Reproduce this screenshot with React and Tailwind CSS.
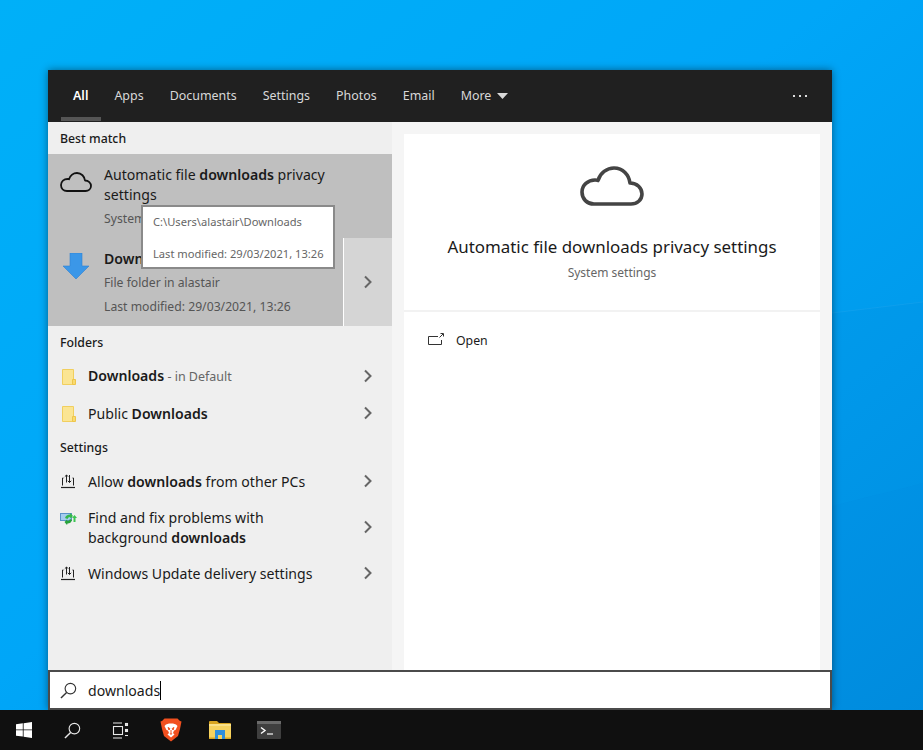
import React from "react";

const Chevron = () => (
  <svg width="10" height="14" viewBox="0 0 10 14" fill="none" className="shrink-0 -mt-px">
    <path d="M2 1.5 L7.5 7 L2 12.5" stroke="#666" strokeWidth="2" />
  </svg>
);

const Cloud = ({ w, h, sw }) => (
  <svg width={w} height={h} viewBox="0 0 64 40" fill="none" className="shrink-0">
    <path
      d="M14 38 C7 38 2 33 2 26 C2 19 8 14 15 14 C16 14 17 14 18 14.5 C20 7 27 2 34 2 C43 2 49 9 50 17 C57 17 62 22 62 28 C62 34 57 38 51 38 Z"
      stroke={sw.c}
      strokeWidth={sw.w}
      strokeLinejoin="round"
    />
  </svg>
);

const FolderPage = () => (
  <svg width="16" height="18" viewBox="0 0 16 18" className="shrink-0">
    <path d="M2.5 1.5 H13.5 V16.5 H2.5 Z" fill="#fbe593" stroke="#f1cf5e" />
    <path d="M12.5 11.5 H15.5 V16.5 H12.5 Z" fill="#f9da6f" stroke="#eec54a" />
  </svg>
);

const LaptopArrows = () => (
  <svg width="16" height="15" viewBox="0 0 16 15" fill="none" className="shrink-0 -mt-px" stroke="#222" strokeWidth="1">
    <path d="M3.5 4 H2.5 V11.5 M13.5 11.5 V4 H12.5" />
    <path d="M1 13.5 H15" strokeWidth="1.2" />
    <path d="M6.5 8.5 V1 M4.8 2.7 L6.5 1 L8.2 2.7" />
    <path d="M9.5 1 V8.5 M7.8 6.8 L9.5 8.5 L11.2 6.8" />
  </svg>
);

const FixIcon = () => (
  <svg width="17" height="12" viewBox="0 0 17 12" className="shrink-0">
    <rect x="0" y="0" width="12" height="8" fill="#5b93c9" />
    <rect x="1" y="1" width="10" height="6" fill="#a5cdf0" />
    <path d="M5 5 Q6 1.5 10 1.5 L10.5 0 L13 3 L10.5 5.5 L10 4 Q8 4 7.5 6 Z" fill="#35b84a" />
    <path d="M12 7 Q11 10.5 7.5 10.5 L7 12 L4.5 9 L7 6.5 L7.5 8 Q9.5 8 10 6 Z" fill="#27a33c" />
    <path d="M12 5 L14.5 2 L17 5 H15.5 V9 H13.5 V5 Z" fill="#3cc552" />
  </svg>
);

const SearchGlass = ({ color, size }) => (
  <svg width={size} height={size} viewBox="0 0 18 18" fill="none" className="shrink-0" stroke={color} strokeWidth="1.2">
    <circle cx="11" cy="7" r="5.6" />
    <path d="M7 11 L1 17" strokeWidth="1.5" />
  </svg>
);

const Brave = () => (
  <svg width="22" height="24" viewBox="0 0 22 24" className="shrink-0">
    <path d="M4.5 0.5 H17.5 L20 3 L21.5 3.5 L20 11 L18 18 L11 23.5 L4 18 L2 11 L0.5 3.5 L2 3 Z" fill="#f1501f" />
    <path
      d="M6 6.5 L9 5.5 H13 L16 6.5 L17.5 8 L15.5 12 L14 12.5 L13 15 L14.5 16.5 L11 19.5 L7.5 16.5 L9 15 L8 12.5 L6.5 12 L4.5 8 Z"
      fill="#fff"
    />
    <path d="M8 9.5 L9.8 10.5 L9 12 Z M14 9.5 L12.2 10.5 L13 12 Z M11 12 V16" stroke="#f1501f" strokeWidth="1" fill="#f1501f" />
    <path d="M9.5 15.5 H12.5 L11 17 Z" fill="#f1501f" />
  </svg>
);

const Explorer = () => (
  <svg width="22" height="18" viewBox="0 0 22 18" className="shrink-0">
    <path d="M0 1 Q0 0 1 0 H8 L10 2 H21 Q22 2 22 3 V5 H0 Z" fill="#d9a520" />
    <rect x="0" y="3" width="22" height="15" fill="#f7d35f" />
    <rect x="0" y="3" width="22" height="2" fill="#fbe28a" />
    <path d="M6 9 H16 V18 H13 V14 H9 V18 H6 Z" fill="#2f8fdc" />
    <rect x="0" y="16.5" width="6" height="1.5" fill="#d9a520" />
    <rect x="16" y="16.5" width="6" height="1.5" fill="#d9a520" />
  </svg>
);

const Terminal = () => (
  <svg width="24" height="18" viewBox="0 0 24 18" className="shrink-0">
    <rect width="24" height="18" rx="1" fill="#3f3f3f" />
    <rect width="24" height="3" fill="#6a6a6a" />
    <path d="M4 6.5 L8 9.5 L4 12.5" stroke="#fff" strokeWidth="1.4" fill="none" />
    <path d="M10 13 H16" stroke="#ddd" strokeWidth="1.4" />
  </svg>
);

const Row = ({ h, children }) => (
  <div className={`flex items-center pl-3 pr-[19px] ${h}`}>{children}</div>
);

const GroupLabel = ({ h, children }) => (
  <div className={`flex items-center pl-3 text-[12.3px] font-medium text-[#1a1a1a] ${h}`}>{children}</div>
);

export default function App() {
  const body = "text-[14.1px] leading-5 text-[#1a1a1a]";
  const sub = "text-[12.2px] leading-5 mt-[4px] text-[#555]";
  return (
    <div className="relative flex flex-col w-[923px] h-[750px] overflow-hidden font-['Noto_Sans',sans-serif]">
      <svg className="absolute inset-0" width="923" height="750" viewBox="0 0 923 750">
        <defs>
          <linearGradient id="wall" x1="0" y1="0" x2="1" y2="1">
            <stop offset="0" stopColor="#00b0f8" />
            <stop offset="0.45" stopColor="#00a6f8" />
            <stop offset="1" stopColor="#008fdf" />
          </linearGradient>
        </defs>
        <rect width="923" height="750" fill="url(#wall)" />
        <path d="M832 313 L923 302 V750 H832 Z" fill="#0060c0" fillOpacity="0.05" />
        <path d="M832 313 L923 302" stroke="#ffffff" strokeOpacity="0.05" />
        <path d="M832 506 L923 483 V750 H832 Z" fill="#0060c0" fillOpacity="0.04" />
      </svg>
      <div className="relative flex-1 flex pt-[70px] pl-12">
        <div className="flex flex-col w-[784px] h-[640px] shadow-[0_0_8px_rgba(0,0,0,0.45)]">
          <div className="flex items-center h-[52px] bg-[#202020] pl-[25px] pr-[25px] gap-[26px] text-[12.45px] text-[#d8d8d8] relative">
            <span className="font-semibold text-white">All</span>
            <span>Apps</span>
            <span>Documents</span>
            <span>Settings</span>
            <span>Photos</span>
            <span>Email</span>
            <span className="flex items-center gap-[6px]">
              More
              <svg width="11" height="6" viewBox="0 0 11 6"><path d="M0 0 H11 L5.5 6 Z" fill="#d8d8d8" /></svg>
            </span>
            <svg width="14" height="2" viewBox="0 0 14 2" className="ml-auto" fill="#ddd">
              <rect x="0" width="2" height="2" /><rect x="6" width="2" height="2" /><rect x="12" width="2" height="2" />
            </svg>
            <div className="absolute left-[13px] bottom-[1px] w-10 h-1 bg-[#555]" />
          </div>
          <div className="flex flex-1 min-h-0">
            <div className="relative w-[344px] bg-[#efefef] flex flex-col">
              <GroupLabel h="h-8 pt-[3px]">Best match</GroupLabel>
              <div className="flex h-[84px] bg-[#bfbfbf] pl-3 pt-[11px]">
                <div className="w-11 pt-[7px]"><Cloud w={32} h={20} sw={{ c: "#111", w: 3.6 }} /></div>
                <div className="flex-1 pr-10">
                  <div className={body}>Automatic file <b className="font-semibold">downloads</b> privacy settings</div>
                  <div className={sub}>System settings</div>
                </div>
              </div>
              <div className="flex h-[88px]">
                <div className="flex w-[295px] bg-[#bfbfbf] pl-[15px] pt-[11px]">
                  <svg width="26" height="27" viewBox="0 0 26 27" className="shrink-0 mt-1">
                    <path d="M7 0 H19 V13 H26 L13 26 L0 13 H7 Z" fill="#3b97e8" stroke="#2f7fd0" strokeWidth="0.6" />
                  </svg>
                  <div className="ml-[15px]">
                    <div className={`${body} font-semibold`}>Downloads</div>
                    <div className={sub}>File folder in alastair</div>
                    <div className={sub}>Last modified: 29/03/2021, 13:26</div>
                  </div>
                </div>
                <div className="w-px bg-white" />
                <div className="flex-1 bg-[#d5d5d5] flex items-center justify-center"><Chevron /></div>
              </div>
              <GroupLabel h="h-8 pt-[3px]">Folders</GroupLabel>
              <Row h="h-[37px]">
                <div className="w-7"><FolderPage /></div>
                <span className={`flex-1 ${body}`}><b className="font-semibold">Downloads</b><span className="text-[12.5px] text-[#666]"> - in Default</span></span>
                <Chevron />
              </Row>
              <Row h="h-[37px]">
                <div className="w-7"><FolderPage /></div>
                <span className={`flex-1 ${body}`}>Public <b className="font-semibold">Downloads</b></span>
                <Chevron />
              </Row>
              <GroupLabel h="h-[31px] pt-px">Settings</GroupLabel>
              <Row h="h-[37px]">
                <div className="w-7"><LaptopArrows /></div>
                <span className={`flex-1 ${body}`}>Allow <b className="font-semibold">downloads</b> from other PCs</span>
                <Chevron />
              </Row>
              <Row h="h-[55px]">
                <div className="w-7 -mt-[17px]"><FixIcon /></div>
                <span className={`flex-1 ${body}`}>Find and fix problems with<br />background <b className="font-semibold">downloads</b></span>
                <Chevron />
              </Row>
              <Row h="h-[37px]">
                <div className="w-7"><LaptopArrows /></div>
                <span className={`flex-1 ${body}`}>Windows Update delivery settings</span>
                <Chevron />
              </Row>
              <div className="absolute left-[93px] top-[83px] w-[194px] h-[64px] bg-white border-2 border-[#8a8a8a] pl-[10px] pt-[7px] text-[11.15px] leading-[16px] text-[#666]">
                <div>C:\Users\alastair\Downloads</div>
                <div className="mt-[16px]">Last modified: 29/03/2021, 13:26</div>
              </div>
            </div>
            <div className="flex-1 bg-[#f5f5f5] pt-3 px-3">
              <div className="h-full bg-white flex flex-col">
                <div className="h-[178px] flex flex-col items-center pt-8 border-b-2 border-[#f2f2f2]">
                  <Cloud w={64} h={40} sw={{ c: "#444", w: 3.6 }} />
                  <div className="mt-[29px] text-[16.9px] leading-6 text-[#1a1a1a]">Automatic file downloads privacy settings</div>
                  <div className="mt-[4px] text-[12px] leading-5 text-[#666]">System settings</div>
                </div>
                <div className="flex items-center pl-6 pt-5 gap-[12px] text-[12.3px] text-[#1a1a1a]">
                  <svg width="16" height="13" viewBox="0 0 16 13" fill="none" stroke="#333" strokeWidth="1" className="-mt-[4px]">
                    <path d="M10 3.5 H0.5 V11.5 H13.5 V7" />
                    <path d="M11.5 4.5 L15 1 M12.5 0.5 H15.5 V3.5" />
                  </svg>
                  Open
                </div>
              </div>
            </div>
          </div>
          <div className="flex items-center h-10 bg-white border-2 border-[#4b4b4b] pl-[10px]">
            <SearchGlass color="#333" size={17} />
            <span className="ml-[11px] pt-px text-[14.1px] text-[#1a1a1a]">downloads</span>
            <span className="w-px h-[19px] bg-black" />
          </div>
        </div>
      </div>
      <div className="relative flex items-center h-10 bg-[#101010] shrink-0">
        <div className="w-12 flex justify-center">
          <svg width="16" height="16" viewBox="0 0 16 16" fill="#fff">
            <path d="M0 2.2 L6.8 1.3 V7.5 H0 Z M7.6 1.2 L16 0 V7.5 H7.6 Z M0 8.3 H6.8 V14.6 L0 13.7 Z M7.6 8.3 H16 V16 L7.6 14.8 Z" />
          </svg>
        </div>
        <div className="w-12 flex justify-center"><SearchGlass color="#e8e8e8" size={17} /></div>
        <div className="w-[48px] flex justify-center">
          <svg width="17" height="17" viewBox="0 0 17 17" fill="none" stroke="#e8e8e8" strokeWidth="1.1">
            <path d="M1 1 H10 M1 16 H10" />
            <rect x="1.5" y="4.5" width="9" height="8" />
            <rect x="13.5" y="1.5" width="2" height="2" />
            <rect x="13.5" y="7.5" width="2" height="2" fill="#e8e8e8" />
            <path d="M13 13.5 H16" />
          </svg>
        </div>
        <div className="w-[54px] flex justify-center"><Brave /></div>
        <div className="w-[44px] flex justify-center"><Explorer /></div>
        <div className="w-[54px] flex justify-center"><Terminal /></div>
      </div>
    </div>
  );
}
